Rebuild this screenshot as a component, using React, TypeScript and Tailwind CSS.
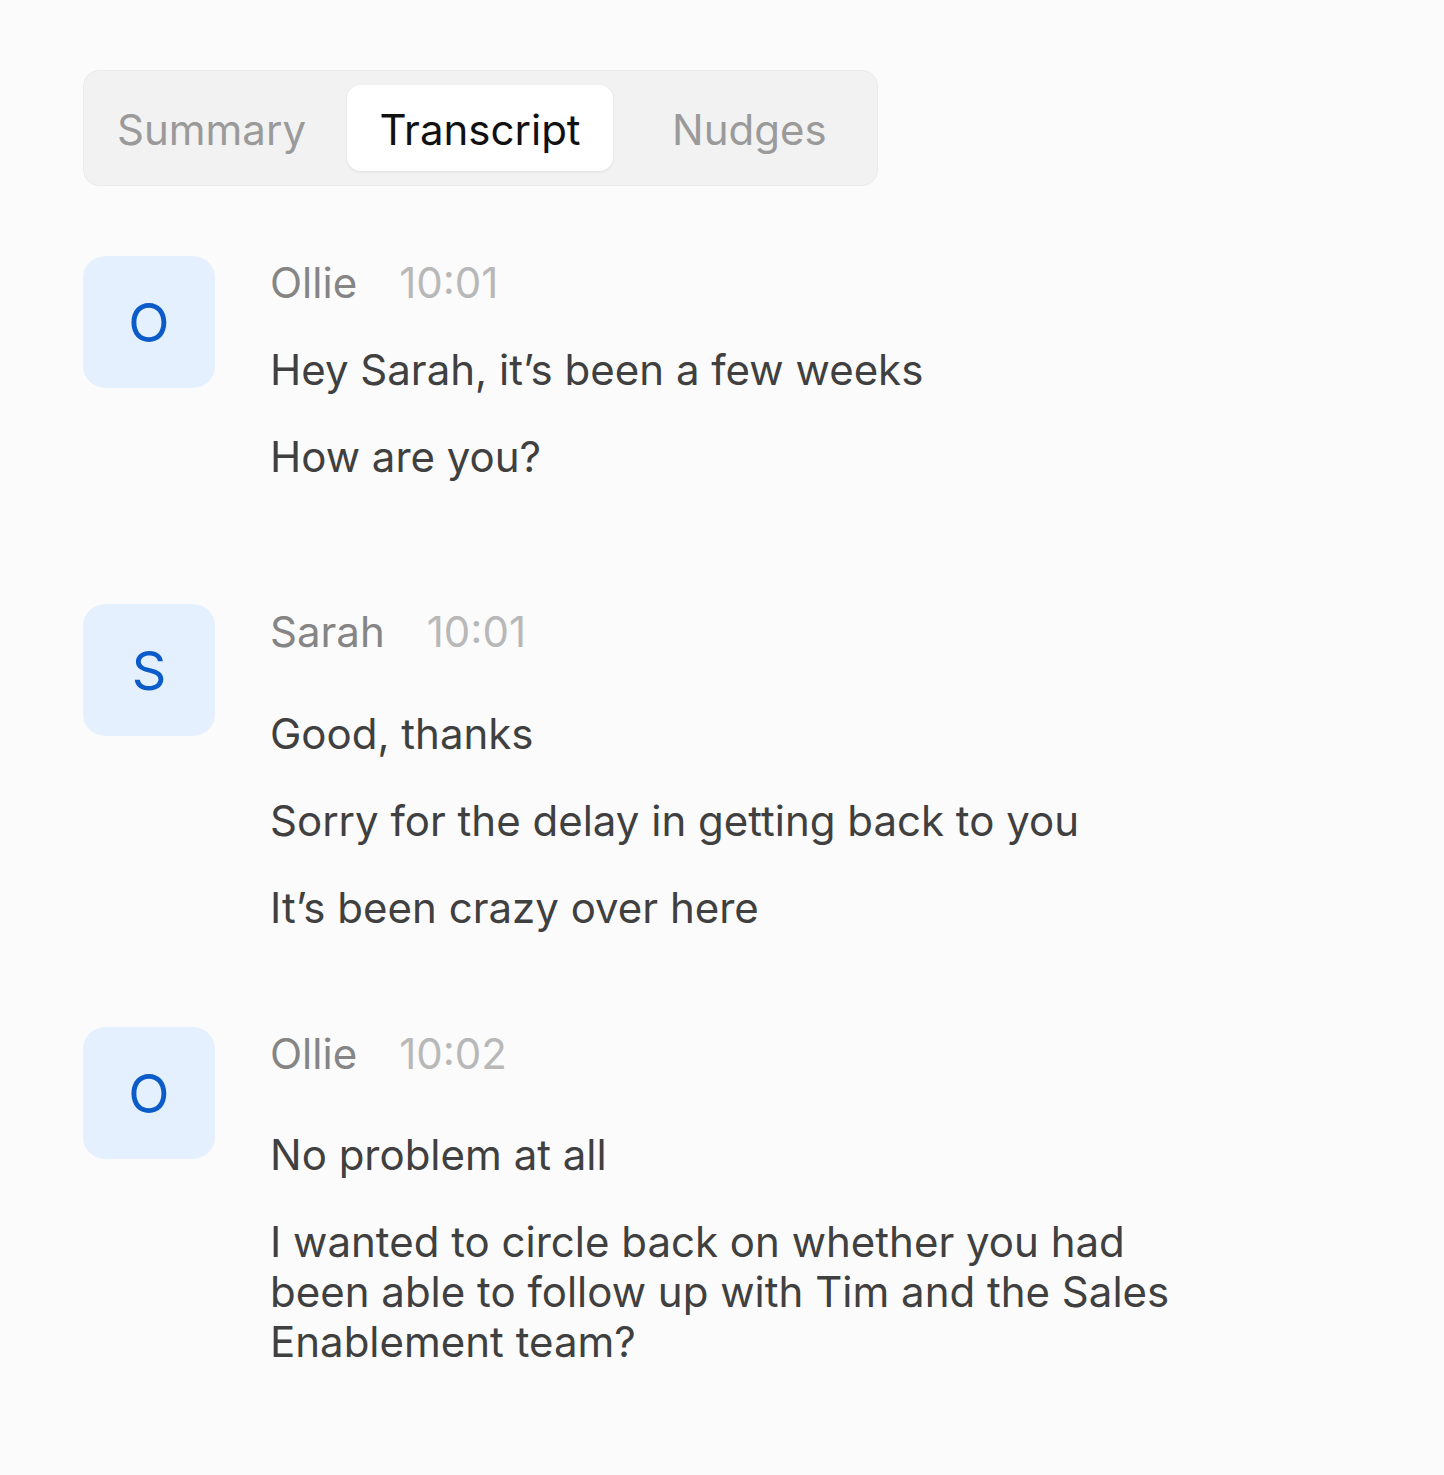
const font = { fontFamily: 'Inter, "Noto Sans", sans-serif' };

type Entry = {
  initial: string;
  name: string;
  time: string;
  lines: string[];
  headGap: string;
  top: string;
  pad: string;
};

const entries: Entry[] = [
  {
    initial: 'O',
    name: 'Ollie',
    time: '10:01',
    lines: ['Hey Sarah, it’s been a few weeks', 'How are you?'],
    headGap: 'mt-[37px]',
    top: 'mt-[70px]',
    pad: 'pt-[2px]',
  },
  {
    initial: 'S',
    name: 'Sarah',
    time: '10:01',
    lines: ['Good, thanks', 'Sorry for the delay in getting back to you', 'It’s been crazy over here'],
    headGap: 'mt-[52px]',
    top: 'mt-[122px]',
    pad: 'pt-[3px]',
  },
  {
    initial: 'O',
    name: 'Ollie',
    time: '10:02',
    lines: [
      'No problem at all',
      'I wanted to circle back on whether you had been able to follow up with Tim and the Sales Enablement team?',
    ],
    headGap: 'mt-[51px]',
    top: 'mt-[94px]',
    pad: 'pt-[2px]',
  },
];

function Tabs() {
  return (
    <div className="flex h-[116px] w-[795px] items-stretch rounded-[16px] border border-[#ebebeb] bg-[#f2f2f2] p-[14px] text-[42px] leading-[50px]">
      <div className="flex w-[249px] items-center pl-[19px] pt-[3px] text-[#9a9a9a]">Summary</div>
      <div className="flex w-[266px] items-center justify-center rounded-[14px] bg-white pt-[3px] text-[#111] shadow-[0_1px_3px_rgba(0,0,0,0.08)]">
        Transcript
      </div>
      <div className="flex flex-1 items-center pl-[59px] pt-[3px] text-[#9a9a9a]">Nudges</div>
    </div>
  );
}

function Message({ entry }: { entry: Entry }) {
  return (
    <div className={`flex ${entry.top}`}>
      <div className="flex h-[132px] w-[132px] shrink-0 items-center justify-center rounded-[22px] bg-[#e5f0ff] text-[54px] text-[#0b5cc8]">
        {entry.initial}
      </div>
      <div className={`ml-[55px] w-[940px] ${entry.pad}`}>
        <div className="flex gap-[42px] text-[42px] leading-[50px]">
          <span className="text-[#858585]">{entry.name}</span>
          <span className="text-[#b8b8b8]">{entry.time}</span>
        </div>
        <div className={`flex flex-col gap-[37px] ${entry.headGap}`}>
          {entry.lines.map((l, i) => (
            <p key={i} className="text-[42px] leading-[50px] text-[#404040]">
              {l}
            </p>
          ))}
        </div>
      </div>
    </div>
  );
}

export default function App() {
  return (
    <div className="min-h-[1475px] w-[1444px] bg-[#fbfbfb] pl-[83px] pt-[70px]" style={font}>
      <Tabs />
      {entries.map((e, i) => (
        <Message key={i} entry={e} />
      ))}
    </div>
  );
}
